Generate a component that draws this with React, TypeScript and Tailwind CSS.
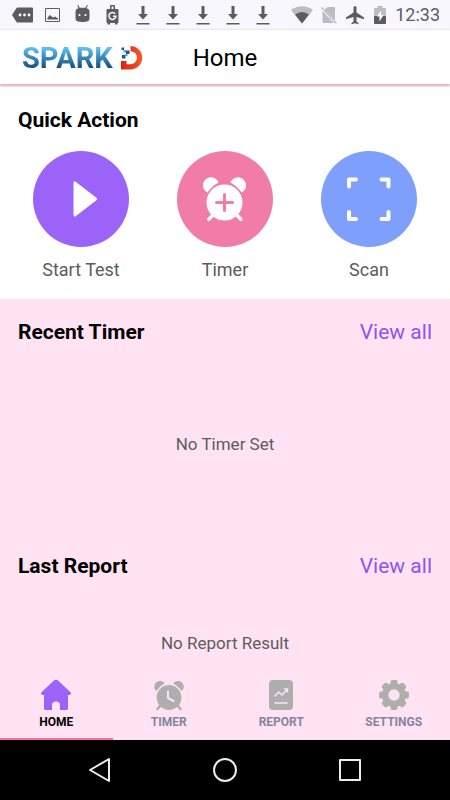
import type { ReactNode } from "react";

const quickActions = [
  { label: "Start Test", color: "bg-[#9b63f8]", icon: <PlayIcon /> },
  { label: "Timer", color: "bg-[#f07ca7]", icon: <AddAlarmIcon /> },
  { label: "Scan", color: "bg-[#7f9ffc]", icon: <ScanIcon /> },
];

const tabs = [
  { label: "HOME", icon: <HomeIcon />, active: true },
  { label: "TIMER", icon: <AlarmIcon />, active: false },
  { label: "REPORT", icon: <ReportIcon />, active: false },
  { label: "SETTINGS", icon: <GearIcon />, active: false },
];

function PlayIcon() {
  return (
    <svg viewBox="0 0 96 96" className="size-24" fill="#fff">
      <path d="M40.5 32.5v31q0 3.500 2.800 1.300L63.400 49.300q1.400-1.300 0-2.600L43.300 31.200q-2.800-2.200-2.800 1.300Z" />
    </svg>
  );
}

function AddAlarmIcon() {
  return (
    <svg viewBox="0 0 96 96" className="size-24" fill="#fff">
      <path d="M41.5 31.5A8 8 0 1 0 30.500 41.500Q34.500 35.500 41.500 31.500Z" />
      <path d="M53.5 31.500A8 8 0 1 1 64.500 41.500Q60.500 35.500 53.500 31.500Z" />
      <path d="m36 64-4.300 4.300M59.500 64l4.300 4.300" stroke="#fff" strokeWidth="3.5" strokeLinecap="round" />
      <circle cx="47.5" cy="51.5" r="18" />
      <path d="M47.5 43.500v16M39.500 51.500h16" stroke="#f07ca7" strokeWidth="3" strokeLinecap="round" />
    </svg>
  );
}

function ScanIcon() {
  return (
    <svg
      viewBox="0 0 96 96"
      className="size-24"
      fill="none"
      stroke="#fff"
      strokeWidth="4"
      strokeLinecap="round"
      strokeLinejoin="round"
    >
      <path d="M28 35.5v-7h7M60.5 28.5h7v7M67.5 61v7h-7M35 68h-7v-7" />
    </svg>
  );
}

function HomeIcon() {
  return (
    <svg viewBox="0 0 32 32" className="size-8" fill="#9b63f8">
      <path d="M13.6 1.8q2.4-2 4.8 0l12 11.400q1.200 1.200.4 2-.6.8-2 .8H28v13.500q0 1.500-1.500 1.500H20v-5q0-3.500-4-3.500t-4 3.500v5H5.500Q4 31 4 29.500V16h-.8q-1.400 0-2-.8-.8-.8.4-2Z" />
    </svg>
  );
}

function AlarmIcon() {
  return (
    <svg viewBox="0 0 32 32" className="size-8" fill="#aeaeae">
      <path d="M11.8 4.600A5.700 5.700 0 1 0 3.200 11.900Q6.600 6.900 11.800 4.600Z" />
      <path d="M20.2 4.600A5.700 5.700 0 1 1 28.800 11.900Q25.400 6.900 20.200 4.600Z" />
      <path d="m7 27-2.500 3M25 27l2.500 3" stroke="#aeaeae" strokeWidth="2.5" strokeLinecap="round" />
      <circle cx="16" cy="18.5" r="12.4" />
      <path d="M15 12.500v6.500l5.500 3" fill="none" stroke="#ffe3f2" strokeWidth="2" strokeLinecap="round" strokeLinejoin="round" />
    </svg>
  );
}

function ReportIcon() {
  return (
    <svg viewBox="0 0 32 32" className="size-8">
      <rect x="4" y="1" width="24" height="30" rx="4" fill="#aeaeae" />
      <path
        d="m9.500 17.500 4-4.500 3.500 3 5.500-6M19 10h3.500v3.500M9.500 24h13"
        fill="none"
        stroke="#ffe3f2"
        strokeWidth="1.5"
      />
    </svg>
  );
}

function GearIcon() {
  return (
    <svg viewBox="0 0 32 32" className="size-8">
      <g fill="#aeaeae">
        <circle cx="16" cy="16" r="12" />
        <rect x="12.5" y="1" width="7" height="30" rx="2" />
        <rect x="12.5" y="1" width="7" height="30" rx="2" transform="rotate(45 16 16)" />
        <rect x="12.5" y="1" width="7" height="30" rx="2" transform="rotate(90 16 16)" />
        <rect x="12.5" y="1" width="7" height="30" rx="2" transform="rotate(135 16 16)" />
      </g>
      <circle cx="16" cy="16" r="5.7" fill="#ffe3f2" />
    </svg>
  );
}

function DownloadIcon() {
  return (
    <svg viewBox="0 0 16 20" className="h-5 w-4" fill="#5c5c60">
      <path d="M6.5 1h3v8H13l-5 5.500L3 9h3.500ZM1.500 18h13v1.400h-13Z" />
    </svg>
  );
}

function StatusBar() {
  return (
    <div className="flex h-[30px] items-center justify-between bg-[#f8f7fe] pr-2.5 pl-3">
      <div className="flex items-center gap-3.5">
        <div className="flex items-center gap-[11px]">
          <svg viewBox="0 0 22 20" className="h-5 w-[22px]" fill="#5c5c60">
            <path d="M6 2.5h14q1 0 1 1v13q0 1-1 1H6Q5 17.500 4.500 17L0 10l4.500-7Q5 2.500 6 2.500Z" />
            <g fill="#fff">
              <circle cx="8" cy="10" r="1.4" />
              <circle cx="12.5" cy="10" r="1.4" />
              <circle cx="17" cy="10" r="1.4" />
            </g>
          </svg>
          <svg viewBox="0 0 16 16" className="size-4" fill="none" stroke="#5c5c60">
            <path d="M.5 1.500h14v13H.500Z" />
            <path d="M2.500 12.500v-2L5 8l3 2.500 2-1 3 2v1Z" fill="#5c5c60" stroke="none" />
          </svg>
        </div>
        <svg viewBox="0 0 16 20" className="h-5 w-4" fill="#5c5c60">
          <path d="M.5 6.500Q.500 4 3.500 3.200L2.200.5l.9-.4 1.500 2.700h5.800L11.900.1l.9.4L11.500 3.200q3 .8 3 3.300V14q0 3-7 3T.5 14Z" />
          <circle cx="4.500" cy="10" r="1.1" fill="#fff" />
          <circle cx="10.500" cy="10" r="1.1" fill="#fff" />
        </svg>
        <svg viewBox="0 0 16 20" className="h-5 w-4" fill="#5c5c60">
          <path d="M5 4V1q0-1 1-1h3q1 0 1 1v3h2.500q1 0 1 1v12q0 1-1 1v1.500H10V18H5v1.500H2.500V18q-1 0-1-1V5q0-1 1-1ZM6.500 4h2V1.500h-2Z" />
          <path d="M10.200 8.800a3.500 3.500 0 1 0 .7 2.500H8" fill="none" stroke="#fff" strokeWidth="1.5" />
        </svg>
        {[0, 1, 2, 3, 4].map((n) => (
          <DownloadIcon key={n} />
        ))}
      </div>
      <div className="flex items-center gap-2">
        <svg viewBox="0 0 22 18" className="h-[18px] w-[22px]">
          <path d="M0 4Q11-3.500 22 4L11 17.500Z" fill="#bcbcc2" />
          <path d="M4 8.500q7-5 14 0l-7 9Z" fill="#5c5c60" />
        </svg>
        <svg viewBox="0 0 16 18" className="h-[18px] w-4">
          <path d="M1.500 5v11q0 1 1 1h10.500ZM3.500 3.500 6.500 1H13q1 0 1 1v12.500Z" fill="#bcbcc2" />
          <path d="m.5 1.500 15 16" stroke="#bcbcc2" strokeWidth="1.2" />
        </svg>
        <svg viewBox="0 0 20 20" className="size-5" fill="#5c5c60">
          <path d="M8.500 2.500q0-1.500 1.500-1.500t1.500 1.500v5l7.500 5v1.700l-7.500-2.200v4.500l2 1.500v1.300L10 18.300l-3.500 1V18l2-1.500V12L1 14.200v-1.700l7.500-5Z" />
        </svg>
        <svg viewBox="0 0 14 20" className="h-5 w-3.5">
          <path d="M4.500 1h5v2H12q1 0 1 1v7H1V4q0-1 1-1h2.500Z" fill="#bcbcc2" />
          <path d="M1 11h12v7q0 1-1 1H2q-1 0-1-1Z" fill="#5c5c60" />
          <path d="M8 5.500 4 11.500h2.500v5L10.500 10H8Z" fill="#fff" />
        </svg>
        <span className="text-lg leading-5 text-[#5c5c60]">12:33</span>
      </div>
    </div>
  );
}

function Logo() {
  return (
    <div className="flex items-center gap-2">
      <span className="bg-linear-to-b from-[#5cbdf0] from-20% to-[#0d4a7c] to-85% bg-clip-text text-[29px] leading-8 font-bold text-transparent">
        SPARK
      </span>
      <svg viewBox="0 0 22 24" className="h-6 w-[22px]">
        <defs>
          <linearGradient id="logo-d" x2="1" y2="0">
            <stop stopColor="#d9230f" />
            <stop offset="1" stopColor="#f8562c" />
          </linearGradient>
        </defs>
        <path d="M9.500 0A11.700 11.700 0 0 1 9.500 23.400H0V15H5.500v3.200h4a6.500 6.500 0 0 0 0-13Z" fill="url(#logo-d)" />
        <path d="M.500 1.500h2.500v2.500H.500ZM5 4.500h3.500V8H5ZM1 9h3.500v3.500H1Z" fill="#155a91" />
        <path d="M2.500 4H5v2.500H2.500ZM4 8h2.500v2H4Z" fill="#5aa7d6" />
      </svg>
    </div>
  );
}

function Section({ title, children }: { title: string; children: ReactNode }) {
  return (
    <section className="px-[18px] pt-5">
      <div className="flex items-center justify-between text-[21px] leading-[26px]">
        <h2 className="font-bold text-black">{title}</h2>
        <a href="#" className="text-[#8f52f4]">
          View all
        </a>
      </div>
      {children}
    </section>
  );
}

export default function App() {
  return (
    <div className="flex min-h-screen flex-col bg-[#ffe3f2] font-[Roboto,sans-serif]">
      <StatusBar />
      <header className="flex h-[54px] items-center gap-[50px] bg-white pt-0.5 pl-[22px] shadow-[0_1px_3px_#c495ab]">
        <Logo />
        <h1 className="text-2xl text-black">Home</h1>
      </header>

      <main className="flex-1">
        <section className="mt-[3px] bg-white px-[18px] pt-5 pb-[17px]">
          <h2 className="text-[21px] leading-[26px] font-bold text-black">Quick Action</h2>
          <div className="mt-[18px] flex justify-between px-[15px]">
            {quickActions.map((a) => (
              <button key={a.label} className="flex w-24 flex-col items-center gap-[11px]">
                <span className={`rounded-full ${a.color}`}>{a.icon}</span>
                <span className="text-lg leading-6 text-[#5c5c5c]">{a.label}</span>
              </button>
            ))}
          </div>
        </section>
        <Section title="Recent Timer">
          <p className="pt-[86px] pb-[76px] text-center text-[17px] leading-[26px] text-[#5c5c5c]">No Timer Set</p>
        </Section>
        <Section title="Last Report">
          <p className="pt-[51px] pb-4 text-center text-[17px] leading-[26px] text-[#5c5c5c]">No Report Result</p>
        </Section>
      </main>

      <nav className="grid grid-cols-4">
        {tabs.map((t) => (
          <button
            key={t.label}
            className={`flex flex-col items-center border-b-2 pt-1 pb-[5px] text-xs leading-[22px] font-bold ${
              t.active ? "border-[#f5709f] text-black" : "border-transparent text-[#8583a0]"
            }`}
          >
            {t.icon}
            {t.label}
          </button>
        ))}
      </nav>

      <div className="flex h-[60px] items-center justify-center gap-[97px] bg-black">
        <button aria-label="Back">
          <svg viewBox="0 0 28 28" className="size-7" fill="none" stroke="#eee" strokeWidth="2" strokeLinejoin="round">
            <path d="M23 3v22L4 14Z" />
          </svg>
        </button>
        <button aria-label="Home">
          <svg viewBox="0 0 28 28" className="size-7" fill="none" stroke="#eee" strokeWidth="2">
            <circle cx="14" cy="14" r="11" />
          </svg>
        </button>
        <button aria-label="Recent apps">
          <svg viewBox="0 0 28 28" className="size-7" fill="none" stroke="#eee" strokeWidth="2" strokeLinejoin="round">
            <path d="M4 4h20v20H4Z" />
          </svg>
        </button>
      </div>
    </div>
  );
}
